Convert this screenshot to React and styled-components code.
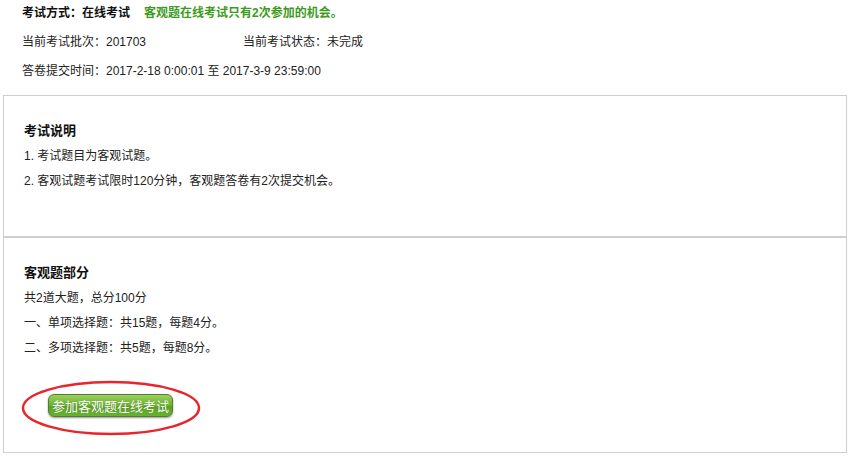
import React from "react";
import styled, { createGlobalStyle } from "styled-components";

const Global = createGlobalStyle`
  html, body {
    margin: 0;
    padding: 0;
    background: #fff;
  }
  body {
    font-family: Arial, "Liberation Sans", "Noto Sans CJK SC", sans-serif;
    font-size: 12px;
    color: #222;
  }
`;

const Page = styled.div`
  width: 851px;
  padding: 0 4px 0 3px;
  box-sizing: border-box;
`;

const Info = styled.div`
  display: flex;
  flex-direction: column;
  gap: 12px;
  padding: 5px 0 0 19px;
  height: 95px;
  box-sizing: border-box;
`;

const Line = styled.div`
  display: flex;
  align-items: center;
  height: 17px;
  line-height: 17px;
`;

const Strong = styled.span`
  font-weight: bold;
  color: #111;
`;

const Notice = styled.span`
  font-weight: bold;
  color: #3b9b1c;
  margin-left: 14px;
`;

const Cell = styled.span`
  width: ${(p) => p.$w || "auto"};
`;

const Panel = styled.section`
  border: 1px solid #cfcfcf;
  height: ${(p) => p.$h}px;
  box-sizing: border-box;
  padding: 26px 0 0 20px;
`;

const Title = styled.h3`
  margin: 0 0 5px;
  font-size: 13px;
  font-weight: bold;
  color: #111;
  line-height: 17px;
`;

const Item = styled.p`
  margin: 0;
  line-height: 25px;
`;

const ButtonArea = styled.div`
  position: relative;
  margin: 33px 0 0 24px;
  width: 125px;
`;

const JoinButton = styled.button`
  display: block;
  width: 125px;
  height: 23px;
  padding: 0;
  border: 1px solid #58773a;
  border-radius: 6px;
  background: linear-gradient(#98d25a, #6db232 50%, #58a022 51%, #68b232);
  color: #fff;
  font-family: "Noto Sans CJK SC", sans-serif;
  font-size: 13px;
  line-height: 21px;
  box-shadow: 0 1px 2px rgba(0, 0, 0, 0.4);
  text-shadow: 0 0 1px rgba(0, 0, 0, 0.3);
  cursor: pointer;
`;

const Ring = styled.svg`
  position: absolute;
  left: -27px;
  top: -14px;
  width: 180px;
  height: 56px;
  pointer-events: none;
`;

export default function App() {
  return (
    <Page>
      <Global />
      <Info>
        <Line>
          <Strong>考试方式：在线考试</Strong>
          <Notice>客观题在线考试只有2次参加的机会。</Notice>
        </Line>
        <Line>
          <Cell $w="221px">当前考试批次：201703</Cell>
          <Cell>当前考试状态：未完成</Cell>
        </Line>
        <Line>答卷提交时间：2017-2-18 0:00:01 至 2017-3-9 23:59:00</Line>
      </Info>
      <Panel $h={142}>
        <Title>考试说明</Title>
        <Item>1. 考试题目为客观试题。</Item>
        <Item>2. 客观试题考试限时120分钟，客观题答卷有2次提交机会。</Item>
      </Panel>
      <Panel $h={216}>
        <Title>客观题部分</Title>
        <Item>共2道大题，总分100分</Item>
        <Item>一、单项选择题：共15题，每题4分。</Item>
        <Item>二、多项选择题：共5题，每题8分。</Item>
        <ButtonArea>
          <JoinButton>参加客观题在线考试</JoinButton>
          <Ring viewBox="0 0 180 56">
            <ellipse cx="90" cy="28" rx="88" ry="26" fill="none" stroke="#e8252b" strokeWidth="2.5" />
          </Ring>
        </ButtonArea>
      </Panel>
    </Page>
  );
}
